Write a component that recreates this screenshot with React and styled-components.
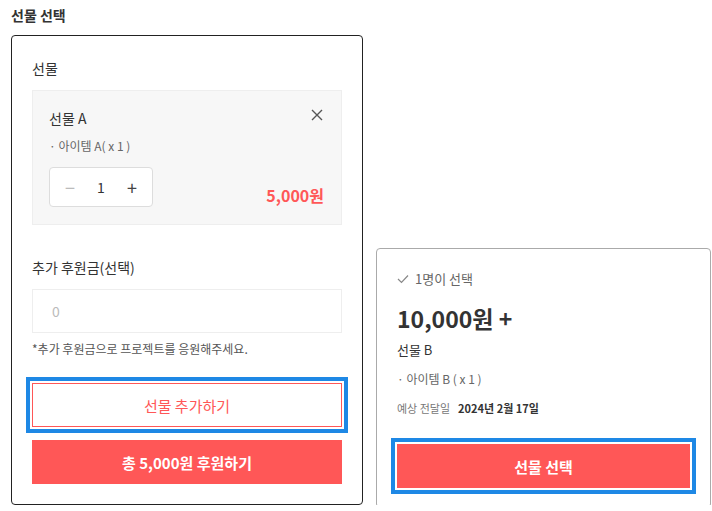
import React from "react";
import styled, { createGlobalStyle } from "styled-components";

const GlobalStyle = createGlobalStyle`
  body {
    margin: 0;
    background: #fff;
    font-family: "Noto Sans CJK KR", "Noto Sans", sans-serif;
    color: #333;
  }
  * { box-sizing: border-box; }
`;

const App = () => {
  return (
    <>
      <GlobalStyle />
      <Page>
        <LeftColumn>
          <Title>선물 선택</Title>
          <Card>
            <Label>선물</Label>
            <GiftBox>
              <GiftHead>
                <GiftName>선물 A</GiftName>
                <CloseBtn>
                  <svg width="12" height="12" viewBox="0 0 12 12">
                    <path d="M1 1L11 11M11 1L1 11" stroke="#555" strokeWidth="1.4" />
                  </svg>
                </CloseBtn>
              </GiftHead>
              <ItemLine>· 아이템 A( x 1 )</ItemLine>
              <GiftFoot>
                <Counter>
                  <CountBtn disabled>−</CountBtn>
                  <CountValue>1</CountValue>
                  <CountBtn>+</CountBtn>
                </Counter>
                <Price>5,000원</Price>
              </GiftFoot>
            </GiftBox>
            <Label $top={32}>추가 후원금(선택)</Label>
            <AmountInput placeholder="0" />
            <Hint>*추가 후원금으로 프로젝트를 응원해주세요.</Hint>
            <OutlineButton>선물 추가하기</OutlineButton>
            <SolidButton $top={13}>총 5,000원 후원하기</SolidButton>
          </Card>
        </LeftColumn>
        <RewardCard>
          <Picked>
            <svg width="12" height="10" viewBox="0 0 12 10">
              <polyline points="1,5 4.5,8.5 11,1.5" fill="none" stroke="#888" strokeWidth="1.2" />
            </svg>
            1명이 선택
          </Picked>
          <BigPrice>10,000원 +</BigPrice>
          <RewardName>선물 B</RewardName>
          <RewardItem>· 아이템 B ( x 1 )</RewardItem>
          <Delivery>
            예상 전달일<strong>2024년 2월 17일</strong>
          </Delivery>
          <SolidButton $top={27} $focus>선물 선택</SolidButton>
        </RewardCard>
      </Page>
    </>
  );
};

export default App;

const Page = styled.div`
  display: flex;
  align-items: flex-end;
  gap: 13px;
  padding: 5px 0 0 11px;
`;

const LeftColumn = styled.div`
  display: flex;
  flex-direction: column;
`;

const Title = styled.div`
  font-size: 14px;
  font-weight: 700;
  line-height: 20px;
  color: #333;
  margin-bottom: 10px;
`;

const Card = styled.div`
  width: 352px;
  border: 1px solid #222;
  border-radius: 4px;
  padding: 22px 20px 20px;
  display: flex;
  flex-direction: column;
`;

const Label = styled.div`
  font-size: 14px;
  line-height: 20px;
  color: #333;
  margin-top: ${(p) => p.$top || 0}px;
  margin-bottom: 12px;
`;

const GiftBox = styled.div`
  background: #f7f7f7;
  border: 1px solid #eee;
  padding: 17px 16px 17px 16px;
  display: flex;
  flex-direction: column;
`;

const GiftHead = styled.div`
  display: flex;
  justify-content: space-between;
  align-items: center;
`;

const GiftName = styled.div`
  font-size: 14px;
  line-height: 20px;
  color: #333;
`;

const CloseBtn = styled.div`
  display: flex;
  margin-right: 2px;
  margin-top: -6px;
`;

const ItemLine = styled.div`
  font-size: 12px;
  line-height: 18px;
  color: #666;
  margin-top: 9px;
`;

const GiftFoot = styled.div`
  display: flex;
  justify-content: space-between;
  align-items: flex-end;
  margin-top: 12px;
  padding-right: 1px;
`;

const Counter = styled.div`
  width: 104px;
  height: 40px;
  background: #fff;
  border: 1px solid #ddd;
  border-radius: 4px;
  display: flex;
  align-items: center;
  justify-content: space-between;
  padding: 0 8px;
`;

const CountBtn = styled.span`
  width: 24px;
  text-align: center;
  font-size: 18px;
  line-height: 20px;
  color: ${(p) => (p.disabled ? "#bbb" : "#444")};
`;

const CountValue = styled.span`
  font-size: 14px;
  color: #333;
`;

const Price = styled.div`
  font-size: 16px;
  font-weight: 700;
  color: #ff5757;
  line-height: 22px;
  margin-bottom: 1px;
`;

const AmountInput = styled.input`
  height: 44px;
  border: 1px solid #eee;
  padding: 0 19px;
  font-size: 14px;
  font-family: inherit;
  outline: none;
  &::placeholder {
    color: #bbb;
  }
`;

const Hint = styled.div`
  font-size: 12px;
  line-height: 18px;
  color: #555;
  margin-top: 7px;
`;

const OutlineButton = styled.button`
  margin-top: 25px;
  height: 44px;
  background: #fff;
  border: 1px solid #ff5757;
  color: #ff5757;
  font-size: 15px;
  font-family: inherit;
  outline: 4px solid #1e88e5;
  outline-offset: 2px;
  cursor: pointer;
`;

const SolidButton = styled.button`
  margin-top: ${(p) => p.$top || 0}px;
  height: 44px;
  background: #ff5757;
  border: none;
  color: #fff;
  font-size: 15px;
  font-weight: 700;
  font-family: inherit;
  cursor: pointer;
  outline: ${(p) => (p.$focus ? "4px solid #1e88e5" : "none")};
  outline-offset: 2px;
`;

const RewardCard = styled.div`
  width: 335px;
  border: 1px solid #aaa;
  border-radius: 4px;
  padding: 21px 20px 19px;
  display: flex;
  flex-direction: column;
  margin-bottom: -3px;
`;

const Picked = styled.div`
  display: flex;
  align-items: center;
  gap: 6px;
  font-size: 13px;
  line-height: 18px;
  color: #666;
`;

const BigPrice = styled.div`
  font-size: 23px;
  font-weight: 700;
  line-height: 32px;
  color: #333;
  margin-top: 14px;
`;

const RewardName = styled.div`
  font-size: 13px;
  line-height: 18px;
  color: #333;
  margin-top: 7px;
`;

const RewardItem = styled.div`
  font-size: 12px;
  line-height: 18px;
  color: #666;
  margin-top: 11px;
`;

const Delivery = styled.div`
  font-size: 11px;
  line-height: 18px;
  color: #777;
  margin-top: 11px;
  strong {
    color: #333;
    margin-left: 8px;
  }
`;
